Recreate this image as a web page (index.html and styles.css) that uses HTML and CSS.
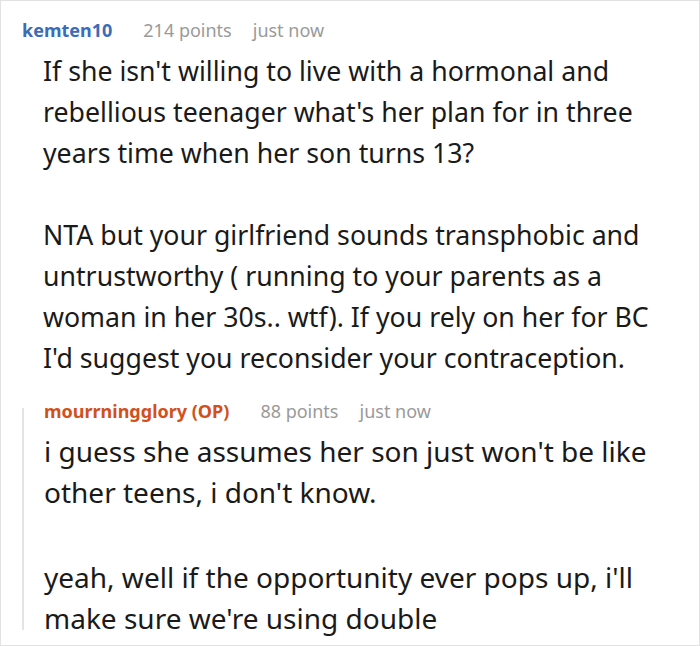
FILE: index.html
```html
<!DOCTYPE html>
<html>
<head>
<meta charset="utf-8">
<link rel="stylesheet" href="styles.css">
</head>
<body>
<div class="frame">
  <div class="comment">
    <div class="meta">
      <span class="user">kemten10</span>
      <span class="points">214 points</span>
      <span class="time">just now</span>
    </div>
    <div class="body">
      <p>If she isn't willing to live with a hormonal and rebellious teenager what's her plan for in three years time when her son turns 13?</p>
      <p>NTA but your girlfriend sounds transphobic and untrustworthy ( running to your parents as a woman in her 30s.. wtf). If you rely on her for BC I'd suggest you reconsider your contraception.</p>
    </div>
    <div class="reply">
      <div class="meta">
        <span class="user op">mourrningglory (OP)</span>
        <span class="points">88 points</span>
        <span class="time">just now</span>
      </div>
      <div class="rbody">
        <p>i guess she assumes her son just won't be like other teens, i don't know.</p>
        <p>yeah, well if the opportunity ever pops up, i'll make sure we're using double</p>
      </div>
    </div>
  </div>
</div>
</body>
</html>
```
FILE: styles.css
```css
html, body {
  margin: 0;
  padding: 0;
  background: #fff;
}
.frame {
  width: 700px;
  height: 646px;
  box-sizing: border-box;
  border: 1px solid #e2e2e2;
  overflow: hidden;
  font-family: "Noto Sans", "Open Sans", sans-serif;
  color: #1a1a1a;
}
.comment {
  padding: 17px 20px 0 21px;
}
.meta {
  display: flex;
  gap: 21px;
  font-size: 18px;
  line-height: 24px;
  color: #9a9a9a;
}
.user {
  font-weight: bold;
  color: #3a6cb7;
  margin-right: 10px;
}
.user.op {
  color: #d2501b;
}
.body {
  margin-left: 21px;
  margin-top: 8px;
  font-size: 26.7px;
  line-height: 41px;
}
.body p, .rbody p {
  margin: 0 0 41px 0;
}
.body p:last-child, .rbody p:last-child {
  margin-bottom: 0;
}
.reply {
  position: relative;
  margin-top: 21px;
  padding-left: 22px;
}
.reply::before {
  content: "";
  position: absolute;
  left: 0;
  top: 9px;
  bottom: 9px;
  width: 2px;
  background: #e4e4e4;
}
.rbody {
  margin-top: 8px;
  font-size: 28px;
  line-height: 41px;
}
.rbody p:first-child {
  margin-bottom: 44px;
}
```
